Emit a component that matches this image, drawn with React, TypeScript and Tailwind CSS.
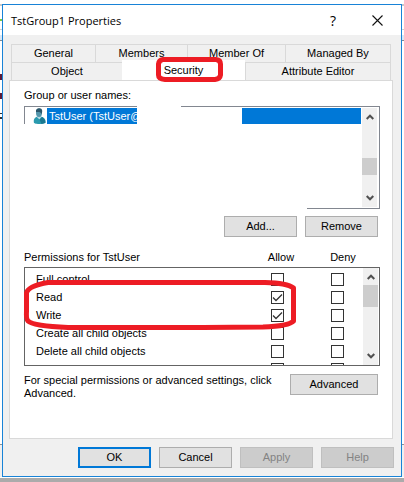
import React from "react";

const TABS_BACK = [
  { label: "General", width: "w-[84px]" },
  { label: "Members", width: "w-[92px]" },
  { label: "Member Of", width: "w-[98px]" },
  { label: "Managed By", width: "flex-1" },
];

const PERMISSIONS = [
  { name: "Full control", allow: false },
  { name: "Read", allow: true },
  { name: "Write", allow: true },
  { name: "Create all child objects", allow: false },
  { name: "Delete all child objects", allow: false },
  { name: "", allow: false },
];

const FOOTER_BUTTONS = [
  { label: "OK", style: "border-2 border-[#0078d7] bg-[#e1e1e1]" },
  { label: "Cancel", style: "border border-[#adadad] bg-[#e1e1e1]" },
  { label: "Apply", style: "border border-[#bfbfbf] bg-[#cccccc] text-[#838383]", disabled: true },
  { label: "Help", style: "border border-[#bfbfbf] bg-[#cccccc] text-[#838383]", disabled: true },
];

const BUTTON = "h-[21px] border border-[#adadad] bg-[#e1e1e1]";

function Chevron({ down }: { down?: boolean }) {
  return (
    <svg viewBox="0 0 8 6" className="h-[6px] w-[8px]" fill="none" stroke="#505050" strokeWidth="2">
      <path d={down ? "M.7 1 4 4.3 7.3 1" : "M.7 5 4 1.7 7.3 5"} />
    </svg>
  );
}

function UserIcon() {
  return (
    <svg viewBox="0 0 14 16" className="h-4 w-[14px]">
      <path d="M2 15C1 11.500 3 8.500 7 8.500s7 2 6.500 6c-2 2-9 2-11.500.5z" fill="#2a9aae" />
      <path d="M4.500 8.800 7.500 11.500l2-2.700z" fill="#b9dbe5" />
      <path d="M7.500 11.500l3-2.500 2.500 3 .5 3-4 1z" fill="#1a7890" />
      <ellipse cx="7" cy="4.700" rx="3" ry="4.300" fill="#5495ab" />
      <path d="M4 4C3.500 1 5.500 0 7.500.2c3 .2 3.300 3 2 6C9 3.500 6.500 4 4 4z" fill="#2c566a" />
    </svg>
  );
}

function CheckBox({ label, checked }: { label: string; checked: boolean }) {
  return (
    <label className="grid size-[13px]">
      <input
        type="checkbox"
        aria-label={label}
        defaultChecked={checked}
        className="peer col-start-1 row-start-1 size-[13px] appearance-none border border-[#333333] bg-white"
      />
      <svg
        viewBox="0 0 13 13"
        className="invisible col-start-1 row-start-1 size-[13px] peer-checked:visible"
        fill="none"
        stroke="#333333"
        strokeWidth="1.3"
      >
        <path d="M2 6.500 5 9.500 11 3.500" />
      </svg>
    </label>
  );
}

/* Slivers of the window that lies behind the dialog */
function BackdropEdge({ left }: { left?: boolean }) {
  return (
    <div className="flex w-[2px] flex-col overflow-hidden bg-white">
      <div className="h-[2px] bg-[#c8c8c8]" />
      <div className={left ? "mt-[13px] h-[2px] bg-[#7ac943]" : "mt-[13px] h-[2px]"} />
      <div className="mt-2 h-px bg-[#d0d0d0]" />
      <div className="mt-[5px] h-[5px] bg-[#d9e8f7]" />
      <div className="h-px bg-[#808890]" />
      {left && (
        <>
          <div className="mt-[33px] h-[6px] bg-[#5a1a38]" />
          <div className="mt-[13px] h-[6px] bg-[#5a1a38]" />
          <div className="mt-[14px] h-px bg-[#303030]" />
          <div className="mt-[3px] h-[2px] bg-[#303030]" />
        </>
      )}
      <div className="flex-1" />
      <div className="h-px bg-[#909090]" />
      <div className="h-[32px] bg-[#f0f0f0]" />
    </div>
  );
}

export default function App() {
  return (
    <div className="bg-white pt-1 font-['Liberation_Sans',sans-serif] text-[11px] leading-[13px] text-black">
      <div className="flex">
        <BackdropEdge left />
        <div className="relative flex-1 border border-[#1883d7] bg-[#f0f0f0]">
          <header className="flex h-[30px] items-center bg-white pl-2 pr-[18px]">
            <h1 className="flex-1 font-['Open_Sans',sans-serif]">TstGroup1 Properties</h1>
            <button className="mr-9 font-['Open_Sans',sans-serif] text-[14px]" aria-label="Help">
              ?
            </button>
            <button aria-label="Close">
              <svg viewBox="0 0 11 11" className="size-[11px]" stroke="#111111" strokeWidth="1.1">
                <path d="M.5.5l10 10M10.500.5l-10 10" />
              </svg>
            </button>
          </header>

          {/* Tabs */}
          <nav className="pl-2 pr-[10px] pt-[9px]">
            <div className="flex h-[18px] border-l border-t border-[#d9d9d9]">
              {TABS_BACK.map((tab) => (
                <button key={tab.label} className={`border-r border-[#d9d9d9] ${tab.width}`}>
                  {tab.label}
                </button>
              ))}
            </div>
            <div className="flex h-[18px]">
              <button className="w-[111px] border-l border-t border-[#d9d9d9]">Object</button>
              <button className="-mt-[2px] w-[123px] bg-white">Security</button>
              <button className="flex-1 border-x border-t border-[#d9d9d9]">Attribute Editor</button>
            </div>
          </nav>

          <main className="ml-[6px] mr-2 border border-[#d9d9d9] bg-white pb-[38px] pl-[14px] pr-3 pt-2">
            <h2>Group or user names:</h2>
            <div className="relative mt-1 flex h-[103px] border border-[#828790] p-px">
              <div className="flex h-4 flex-1 pl-[6px]">
                <UserIcon />
                <span className="ml-px flex-1 whitespace-nowrap bg-[#0078d7] pl-[2px] leading-4 text-white">
                  TstUser (TstUser@
                </span>
              </div>
              <div className="ml-px mr-px flex w-[15px] flex-col items-center bg-[#f0f0f0] py-[6px]">
                <Chevron />
                <div className="mt-[38px] h-[17px] w-full bg-[#cdcdcd]" />
                <div className="flex-1" />
                <Chevron down />
              </div>
              {/* Blanked out parts of the list */}
              <div className="absolute -top-px left-[112px] h-[20px] w-[44px] bg-white" />
              <div className="absolute left-[112px] top-0 h-[20px] w-[105px] bg-white" />
              <div className="absolute -left-px top-[17px] h-[86px] w-[283px] bg-white" />
            </div>

            <div className="mt-[7px] flex justify-end gap-2 pr-[2px]">
              <button className={`w-[73px] ${BUTTON}`}>Add...</button>
              <button className={`w-[73px] ${BUTTON}`}>Remove</button>
            </div>

            <div className="relative mt-[14px]">
              <table className="block">
                <thead className="block">
                  <tr className="flex h-4">
                    <th className="flex-1 text-left font-normal">Permissions for TstUser</th>
                    <th className="w-[60px] font-normal">Allow</th>
                    <th className="w-16 font-normal">Deny</th>
                    <td className="w-[5px]" />
                  </tr>
                </thead>
                <tbody className="block h-[99px] overflow-hidden border border-[#646464] pt-[2px]">
                  {PERMISSIONS.map((row) => (
                    <tr key={row.name} className="flex h-[18px] items-center">
                      <td className="flex-1 pl-[11px]">{row.name}</td>
                      <td className="w-[60px]">
                        <CheckBox label={`Allow ${row.name}`} checked={row.allow} />
                      </td>
                      <td className="w-12">
                        <CheckBox label={`Deny ${row.name}`} checked={false} />
                      </td>
                    </tr>
                  ))}
                </tbody>
              </table>
              <div className="absolute bottom-px right-[2px] flex h-[97px] w-[15px] flex-col items-center bg-[#f0f0f0] py-[6px]">
                <Chevron />
                <div className="mt-[5px] h-[22px] w-full bg-[#cdcdcd]" />
                <div className="flex-1" />
                <Chevron down />
              </div>
            </div>

            <div className="mt-2 flex items-start justify-between pr-[2px]">
              <p className="w-[250px]">
                For special permissions or advanced settings, click Advanced.
              </p>
              <button className={`w-[88px] ${BUTTON}`}>Advanced</button>
            </div>
          </main>

          <footer className="flex justify-end gap-2 pb-2 pr-[7px] pt-2">
            {FOOTER_BUTTONS.map((b) => (
              <button key={b.label} disabled={b.disabled} className={`h-[21px] w-[73px] ${b.style}`}>
                {b.label}
              </button>
            ))}
          </footer>

          {/* Red pen marks */}
          <svg
            viewBox="0 0 398 471"
            className="pointer-events-none absolute left-0 top-0 h-[471px] w-[398px]"
            fill="none"
            stroke="#ed1c24"
            strokeWidth="5"
            strokeLinejoin="round"
          >
            <path d="M160 54.500H213Q217.500 55 217.500 59V70Q217 74 212 74.500H162Q155.500 74 155.500 70V59Q156 55 160 54.500Z" />
            <path d="M45 277.500H262Q284 278 290.500 283V316Q286 321 260 322L200 322.500H65Q30 321 25 316Q23 314 23.500 306V288Q25 281 45 277.500Z" />
          </svg>
        </div>
        <BackdropEdge />
      </div>
      <div className="mt-px h-1 bg-[#ababab]" />
    </div>
  );
}
